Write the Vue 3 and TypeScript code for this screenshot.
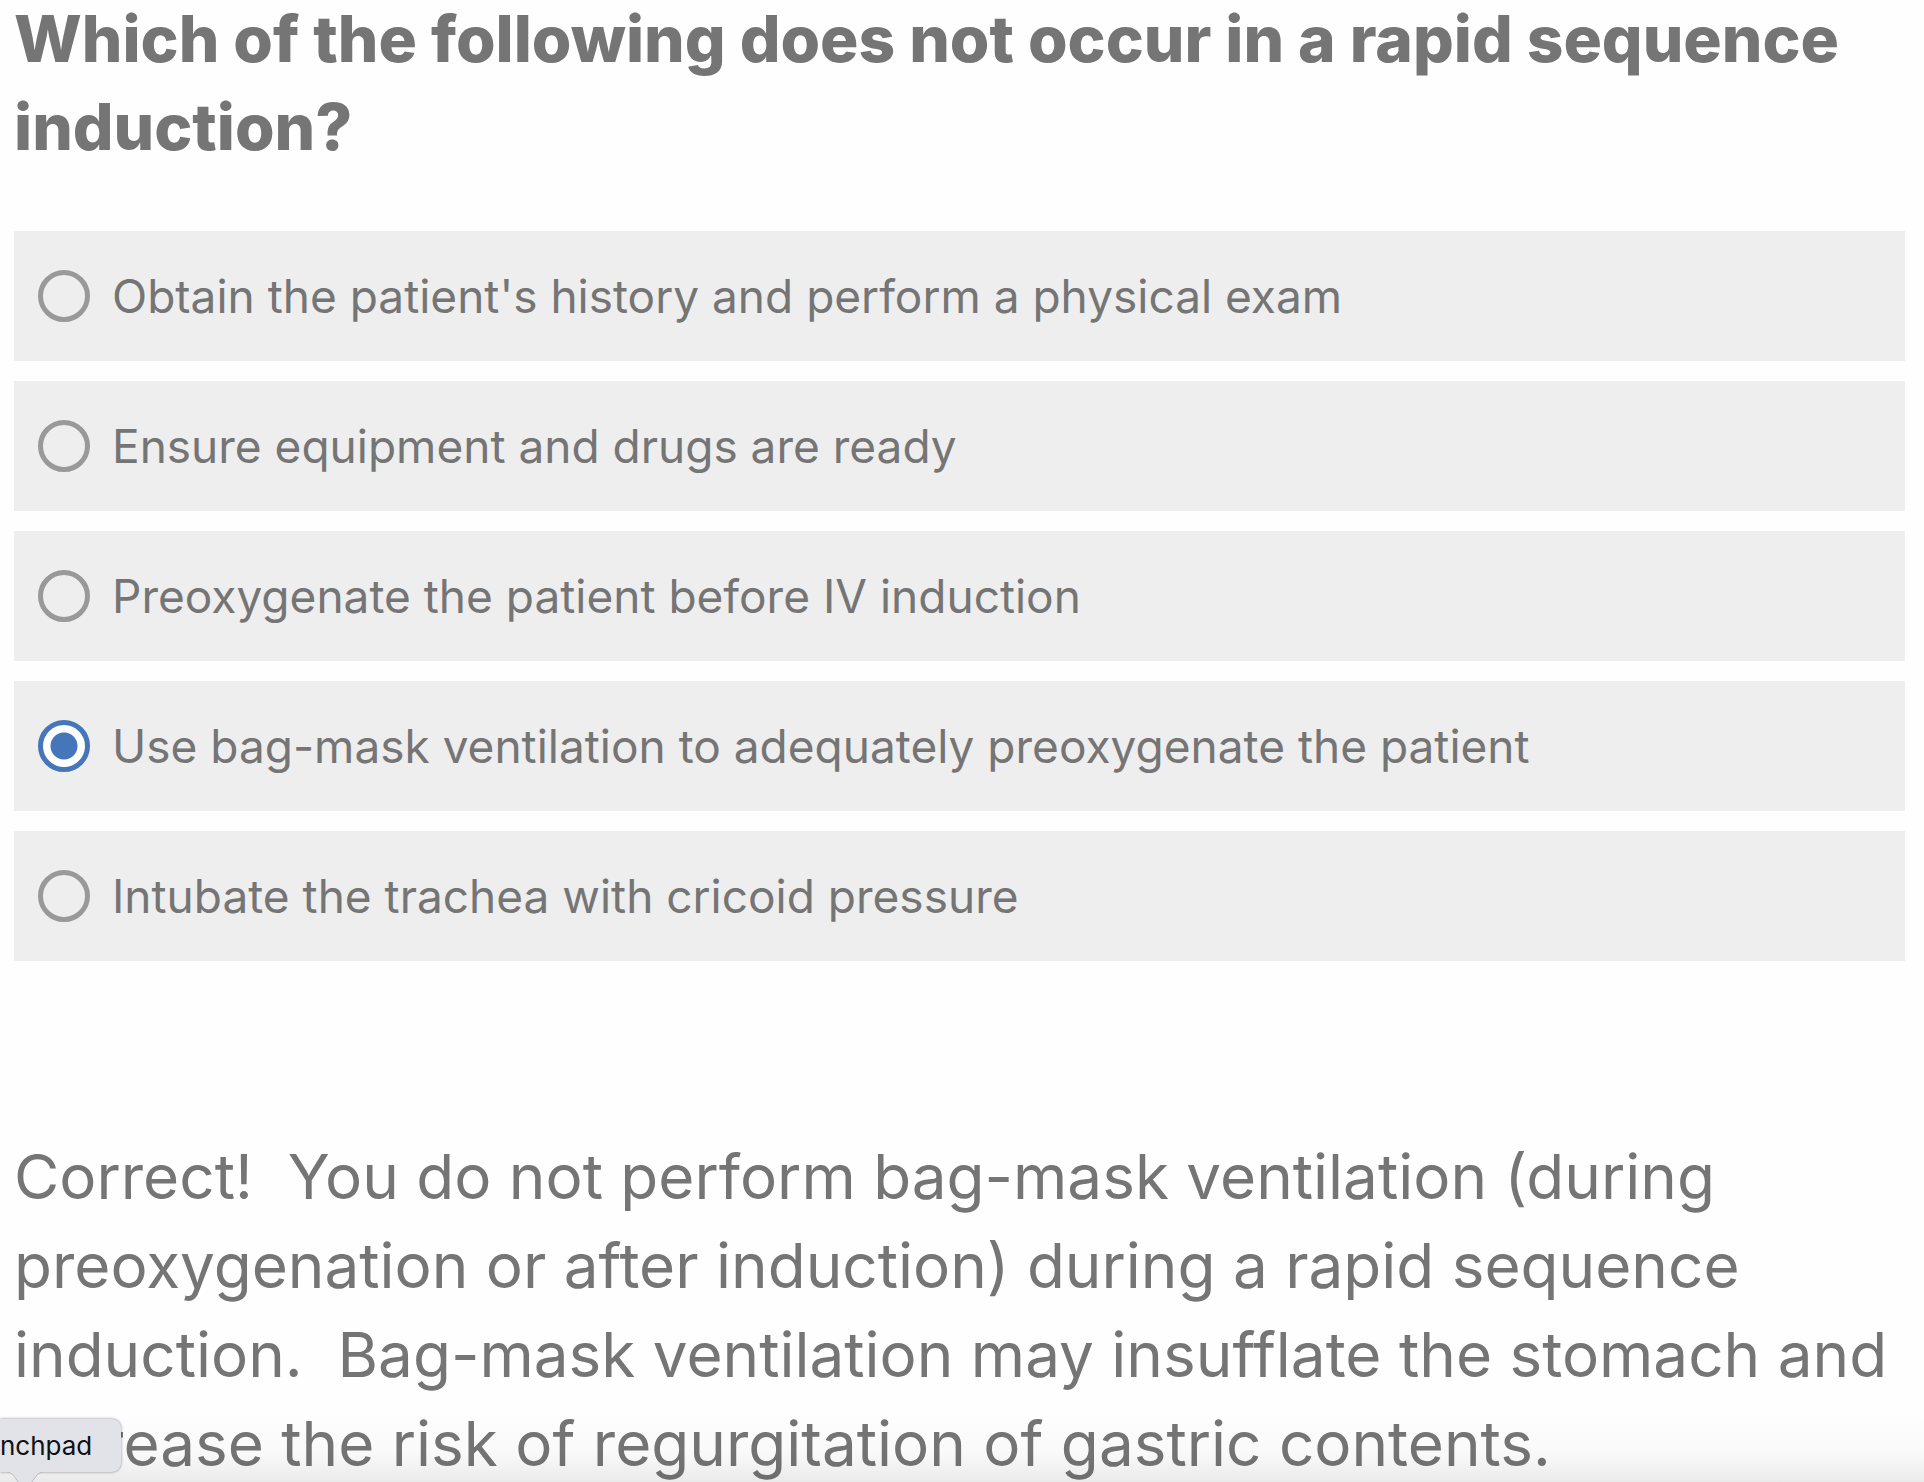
<script setup lang="ts">
import { ref } from 'vue'

interface Choice {
  id: string
  label: string
}

const choices: Choice[] = [
  { id: 'history', label: "Obtain the patient's history and perform a physical exam" },
  { id: 'equipment', label: 'Ensure equipment and drugs are ready' },
  { id: 'preoxygenate', label: 'Preoxygenate the patient before IV induction' },
  { id: 'bag-mask', label: 'Use bag-mask ventilation to adequately preoxygenate the patient' },
  { id: 'intubate', label: 'Intubate the trachea with cricoid pressure' },
]

const selected = ref('bag-mask')
</script>

<template>
  <main class="page">
    <form class="quiz" @submit.prevent>
      <fieldset class="question">
        <legend class="title">Which of the following does not occur in a rapid sequence<br />induction?</legend>
        <div class="choices">
          <label v-for="choice in choices" :key="choice.id" class="choice" :for="choice.id">
            <input :id="choice.id" v-model="selected" class="radio" type="radio" name="answer" :value="choice.id" />
            <span>{{ choice.label }}</span>
          </label>
        </div>
      </fieldset>
    </form>
    <p class="feedback">
      Correct!&nbsp; You do not perform bag-mask ventilation (during<br />
      preoxygenation or after induction) during a rapid sequence<br />
      induction.&nbsp; Bag-mask ventilation may insufflate the stomach and<br />
      increase the risk of regurgitation of gastric contents.
    </p>
    <div class="shade"></div>
    <div class="tooltip" role="tooltip">
      nchpad
      <svg class="tail" viewBox="0 0 36 12" width="36" height="12" aria-hidden="true">
        <path d="M0 0C7 1 8 7 13 12H23C28 7 29 1 36 0Z" fill="#e1e3e9" />
        <path d="M0 0C7 1 8 7 13 12M23 12C28 7 29 1 36 0" fill="none" stroke="#b9babd" />
      </svg>
    </div>
  </main>
</template>

<style>
html,
body {
  background: #fefefe;
}
</style>

<style scoped>
.page {
  position: relative;
  box-sizing: border-box;
  height: 100vh;
  overflow: hidden;
  padding: 0 19px 0 14px;
  color: #757575;
  font-family: Inter, 'Liberation Sans', sans-serif;
}

.quiz {
  margin-top: -5px;
}

.question {
  min-width: 0;
  margin: 0;
  padding: 0;
  border: 0;
}

.title {
  padding: 0;
  font-size: 64px;
  font-weight: 800;
  line-height: 88px;
  white-space: nowrap;
}

.choices {
  display: flex;
  flex-direction: column;
  gap: 20px;
  padding-top: 60px;
}

.choice {
  display: flex;
  align-items: center;
  gap: 22px;
  box-sizing: border-box;
  min-height: 130px;
  padding: 0 24px;
  background: #eeeeee;
  font-size: 46px;
  line-height: 60px;
  white-space: nowrap;
}

.radio {
  flex: none;
  box-sizing: border-box;
  width: 52px;
  height: 52px;
  margin: 0;
  appearance: none;
  border: 5px solid #999999;
  border-radius: 50%;
}

.radio:checked {
  border-color: #4576ba;
  background: radial-gradient(circle, #4576ba 13px, #ffffff 14px);
}

.feedback {
  margin: 171px 0 0;
  font-size: 62px;
  font-weight: 400;
  line-height: 89px;
  white-space: nowrap;
}

.shade {
  position: absolute;
  right: 0;
  bottom: 0;
  left: 0;
  height: 72px;
  background: linear-gradient(rgba(0, 0, 0, 0), rgba(0, 0, 0, 0.02) 60%, rgba(0, 0, 0, 0.08));
}

.tooltip {
  position: absolute;
  bottom: 10px;
  left: 0;
  padding: 0 29px 0 0;
  border-radius: 0 9px 9px 0;
  background: #e1e3e9;
  box-shadow: 0 0 3px rgba(0, 0, 0, 0.45);
  color: #111114;
  font-size: 26px;
  line-height: 53px;
}

.tail {
  position: absolute;
  top: 100%;
  left: 7px;
}
</style>
